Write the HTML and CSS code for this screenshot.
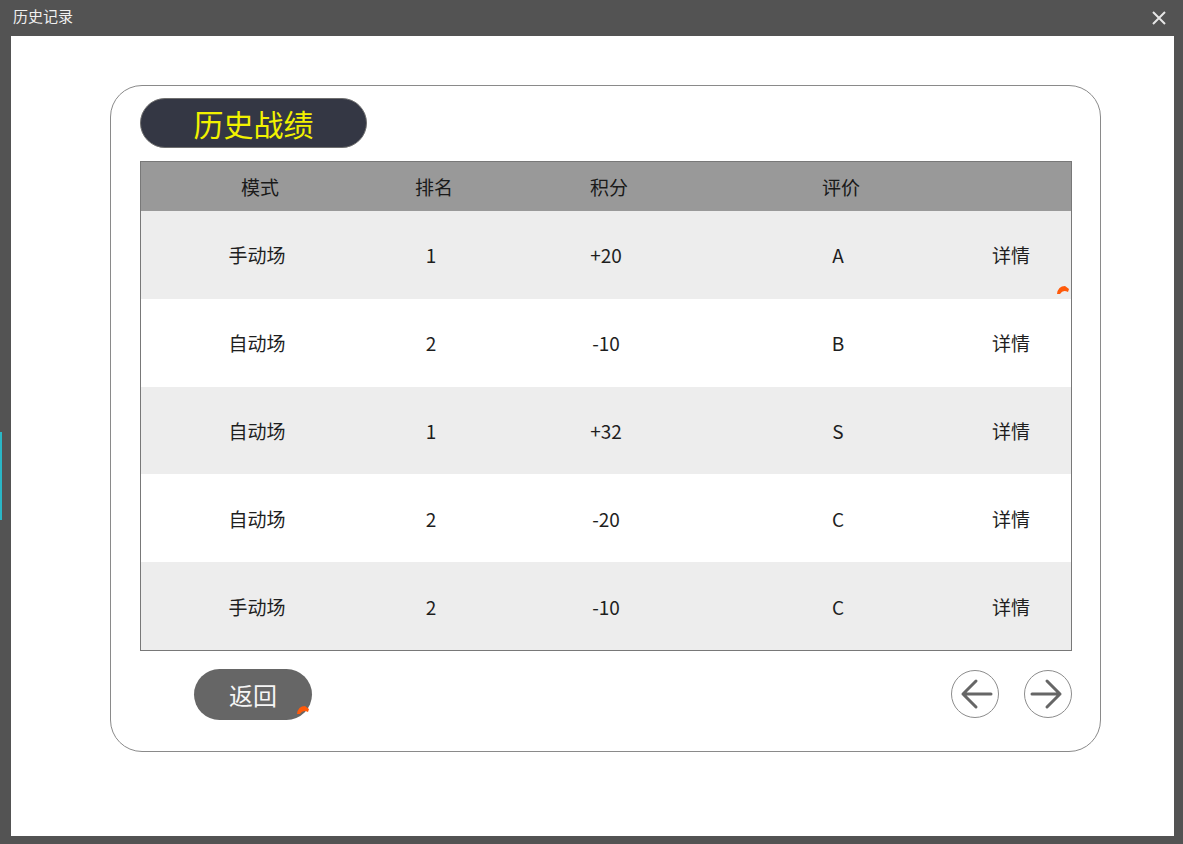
FILE: index.html
```html
<!DOCTYPE html>
<html lang="zh-CN">
<head>
  <meta charset="UTF-8">
  <title>历史记录</title>
  <link rel="stylesheet" href="styles.css">
</head>
<body>
  <div class="desk-strip"></div>
  <div class="window">
    <div class="titlebar">
      <span class="title">历史记录</span>
      <svg class="close" width="14" height="14" viewBox="0 0 14 14">
        <path d="M1 1 L13 13 M13 1 L1 13" stroke="#e6e6e6" stroke-width="2" fill="none"/>
      </svg>
    </div>

    <div class="content">
      <div class="card">
        <div class="badge">历史战绩</div>

        <div class="table">
          <div class="row head">
            <span>模式</span><span>排名</span><span>积分</span><span>评价</span><span></span>
          </div>
          <div class="row">
            <span>手动场</span><span>1</span><span>+20</span><span>A</span><span class="detail">详情</span>
            <svg class="cursor row-cursor" width="14" height="11" viewBox="0 0 14 11">
              <path d="M1 10 Q2 2 9 2 L13 5 L12 8 Q7 5 4 10 Z" fill="#ff5a0a"/>
            </svg>
          </div>
          <div class="row">
            <span>自动场</span><span>2</span><span>-10</span><span>B</span><span class="detail">详情</span>
          </div>
          <div class="row">
            <span>自动场</span><span>1</span><span>+32</span><span>S</span><span class="detail">详情</span>
          </div>
          <div class="row">
            <span>自动场</span><span>2</span><span>-20</span><span>C</span><span class="detail">详情</span>
          </div>
          <div class="row">
            <span>手动场</span><span>2</span><span>-10</span><span>C</span><span class="detail">详情</span>
          </div>
        </div>

        <div class="footer">
          <button class="back">
            返回
            <svg class="cursor back-cursor" width="14" height="11" viewBox="0 0 14 11">
              <path d="M1 10 Q2 2 9 2 L13 5 L12 8 Q7 5 4 10 Z" fill="#ff5a0a"/>
            </svg>
          </button>

          <div class="pager">
            <button class="nav">
              <svg width="48" height="48" viewBox="0 0 48 48">
                <circle cx="24" cy="24" r="23.5" fill="#fff" stroke="#8c8c8c" stroke-width="1"/>
                <path d="M12 24 H40 M12 24 L25 11 M12 24 L25 37" stroke="#666" stroke-width="3" stroke-linecap="round" fill="none"/>
              </svg>
            </button>
            <button class="nav">
              <svg width="48" height="48" viewBox="0 0 48 48">
                <circle cx="24" cy="24" r="23.5" fill="#fff" stroke="#8c8c8c" stroke-width="1"/>
                <path d="M36 24 H8 M36 24 L23 11 M36 24 L23 37" stroke="#666" stroke-width="3" stroke-linecap="round" fill="none"/>
              </svg>
            </button>
          </div>
        </div>
      </div>
    </div>
  </div>
</body>
</html>
```

FILE: styles.css
```css
html, body {
  margin: 0;
  height: 100%;
}

body {
  font-family: "Noto Sans CJK SC", "Microsoft YaHei", sans-serif;
  background: #535353;
  position: relative;
  overflow: hidden;
}

/* bit of the desktop peeking out on the left edge */
.desk-strip {
  position: absolute;
  left: 0;
  top: 432px;
  width: 2px;
  height: 88px;
  background: #2ab7c6;
}

.window {
  display: flex;
  flex-direction: column;
  height: 100vh;
}

.titlebar {
  height: 36px;
  display: flex;
  align-items: center;
  justify-content: space-between;
  padding: 0 17px 0 13px;
  flex-shrink: 0;
}

.title {
  color: #f0f0f0;
  font-size: 15px;
  margin-top: -6px;
}

.content {
  flex: 1;
  background: #fff;
  margin: 0 9px 8px 11px;
  padding: 49px 0 0 99px;
}

.card {
  width: 991px;
  height: 667px;
  box-sizing: border-box;
  border: 1px solid #8a8a8a;
  border-radius: 32px;
  padding: 12px 28px 0 29px;
}

.badge {
  width: 227px;
  height: 50px;
  box-sizing: border-box;
  border: 1px solid #6f6f6f;
  border-radius: 25px;
  background: #343744;
  color: #f2f200;
  font-size: 30px;
  display: flex;
  align-items: center;
  justify-content: center;
}

.table {
  margin-top: 13px;
  border: 1px solid #787878;
  width: 932px;
  box-sizing: border-box;
}

.row {
  display: grid;
  grid-template-columns: 238px 110px 240px 224px 1fr;
  height: 87.8px;
  align-items: center;
  font-size: 19px;
  color: #1e1e1e;
  position: relative;
}

.row span {
  text-align: center;
  padding-right: 6px;
}

.row span.detail {
  padding-right: 2px;
}

.row:nth-child(even) {
  background: #ededed;
}

.row.head {
  height: 49px;
  background: #999999;
  color: #1a1a1a;
}

.row.head span {
  padding-right: 0;
}

.cursor {
  position: absolute;
}

.row-cursor {
  right: 1px;
  bottom: 4px;
}

.footer {
  display: flex;
  align-items: center;
  justify-content: space-between;
  margin-top: 18px;
  padding-left: 54px;
}

.back {
  position: relative;
  width: 118px;
  height: 51px;
  border: none;
  border-radius: 26px;
  background: #666666;
  color: #f5f5f5;
  font-family: inherit;
  font-size: 24px;
  padding: 0;
  cursor: pointer;
}

.back-cursor {
  right: 2px;
  bottom: 5px;
}

.pager {
  display: flex;
  gap: 25px;
}

.nav {
  border: none;
  background: none;
  padding: 0;
  width: 48px;
  height: 48px;
  cursor: pointer;
}

.nav svg {
  display: block;
}
```
